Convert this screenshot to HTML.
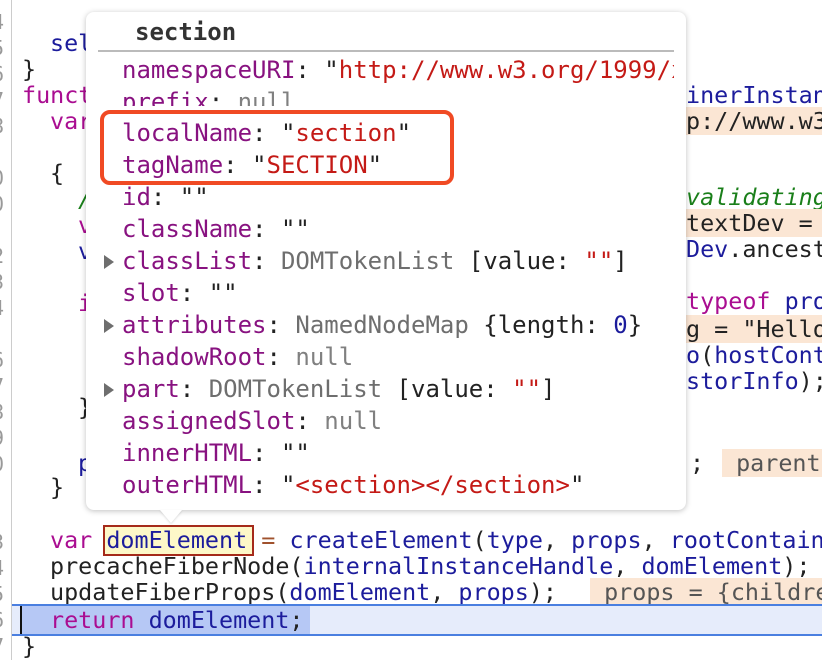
<!DOCTYPE html>
<html style="overflow:hidden"><head><meta charset="utf-8"><style>
body{margin:0;width:822px;height:660px;overflow:hidden;background:#fff;position:relative;font-family:"DejaVu Sans Mono","Liberation Mono",monospace;}
.l{position:absolute;left:0;white-space:pre;font-size:23.4px;line-height:26px;color:#222;}
.k{color:#aa0d91}.n{color:#1c1c9c}.g{color:#1a7f1a;font-style:italic}.s{color:#c41a16}
.pk{background:#fbe6d4}
.gut{position:absolute;left:0;top:0;width:11px;height:660px;border-right:1px solid #ccc;background:#fff;overflow:hidden;}
.gut div{position:absolute;left:-8px;font-size:20px;color:#999;}
.tt{position:absolute;left:86px;top:12px;width:600px;height:498px;background:#fff;border-radius:8px;box-shadow:0 1px 6px rgba(0,0,0,.25);overflow:hidden}
.r{position:absolute;left:36px;white-space:pre;font-size:24px;line-height:32px;color:#222;}
.p{color:#881280}.gr{color:#808080}.ty{color:#6e6e6e}.tri{position:absolute;left:18px;width:0;height:0;border-left:10px solid #6e6e6e;border-top:7px solid transparent;border-bottom:7px solid transparent;}
</style></head><body>
<div style="position:absolute;left:0;top:0;width:822px;height:660px;overflow:hidden">
<div class="l" style="left:50px;top:30px"><span class="n">selection</span></div>
<div class="l" style="left:22px;top:56px">}</div>
<div class="l" style="left:22px;top:82px"><span class="k">function</span></div>
<div class="l" style="left:50px;top:108px"><span class="k">var</span></div>
<div class="l" style="left:50px;top:160px">{</div>
<div class="l" style="left:78px;top:186px"><span class="g">/</span></div>
<div class="l" style="left:78px;top:212px"><span class="k">v</span></div>
<div class="l" style="left:78px;top:238px"><span class="n">v</span></div>
<div class="l" style="left:78px;top:290px"><span class="k">i</span></div>
<div class="l" style="left:78px;top:394px">}</div>
<div class="l" style="left:78px;top:450px"><span class="n">p</span></div>
<div class="l" style="left:50px;top:474px">}</div>
<div class="l" style="left:686px;top:82px"><span class="n">inerInstance</span></div>
<div class="l" style="left:686px;top:108px"><span class="pk">p://www.w3.or</span></div>
<div class="l" style="left:686px;top:184px"><span class="g">validating</span></div>
<div class="l" style="left:686px;top:210px"><span class="pk">textDev = </span></div>
<div class="l" style="left:686px;top:236px"><span class="n">Dev</span>.ancest</div>
<div class="l" style="left:686px;top:288px"><span class="k">typeof</span> <span class="n">pro</span></div>
<div class="l" style="left:686px;top:316px"><span class="pk">g = "Hello</span></div>
<div class="l" style="left:686px;top:342px"><span class="n">o</span>(<span class="n">hostCont</span></div>
<div class="l" style="left:686px;top:368px"><span class="n">storInfo</span>);</div>
<div class="l" style="left:690px;top:450px">;</div>
<div class="l" style="left:722px;top:450px"><span class="pk" style="color:#555"> parentN</span></div>
<div style="position:absolute;left:103px;top:525px;width:147px;height:27px;background:#fdf8c8;border:2px solid #a52a1a;"></div>
<div class="l" style="left:50px;top:527px"><span class="k">var</span> <span class="n">domElement</span> <span style="color:#a0522d">=</span> <span class="n">createElement</span>(<span class="n">type</span>, <span class="n">props</span>, <span class="n">rootContainer</span></div>
<div class="l" style="left:50px;top:553px">precacheFiberNode(<span class="n">internalInstanceHandle</span>, <span class="n">domElement</span>);</div>
<div class="l" style="left:50px;top:579px">updateFiberProps(<span class="n">domElement</span>, <span class="n">props</span>);</div>
<div class="l" style="left:590px;top:579px"><span class="pk" style="color:#555"> props = {children</span></div>
<div style="position:absolute;left:12px;top:604px;width:810px;height:28px;background:#e6ecfb;border-top:2px solid #4a7fe0;border-bottom:2px solid #4a7fe0;"></div>
<div style="position:absolute;left:22px;top:606px;width:288px;height:28px;background:#b6c8f5;"></div>
<div style="position:absolute;left:20px;top:606px;width:2px;height:28px;background:#111;"></div>
<div class="l" style="left:50px;top:607px"><span class="k">return</span> <span class="n">domElement</span>;</div>
<div class="l" style="left:22px;top:633px">}</div>
<div class="gut"><div style="top:10px">4</div><div style="top:36px">5</div><div style="top:62px">6</div><div style="top:88px">7</div><div style="top:114px">8</div><div style="top:166px">0</div><div style="top:192px">0</div><div style="top:244px">2</div><div style="top:270px">3</div><div style="top:296px">4</div><div style="top:348px">6</div><div style="top:374px">7</div><div style="top:400px">8</div><div style="top:426px">9</div><div style="top:452px">0</div><div style="top:530px">3</div><div style="top:556px">4</div><div style="top:582px">5</div><div style="top:608px">6</div><div style="top:634px">7</div></div>
<div class="tt">
<div style="position:absolute;left:49px;top:6px;font-size:24px;font-weight:bold;color:#333;font-family:'DejaVu Sans Mono',monospace">section</div>
<div style="position:absolute;left:12px;top:38px;width:576px;height:2px;background:#bbb"></div>
<div style="position:absolute;left:0;top:40px;width:588px;height:40px;overflow:hidden">
<div class="r" style="top:2px"><span class="p">namespaceURI</span>: "<span class="s">http://www.w3.org/1999/x</span></div></div>
<div class="r" style="top:74px;height:20px;overflow:hidden"><span class="p">prefix</span>: <span class="gr">null</span></div>
<div class="r" style="top:105px"><span class="p">localName</span>: "<span class="s">section</span>"</div>
<div class="r" style="top:137px"><span class="p">tagName</span>: "<span class="s">SECTION</span>"</div>
<div class="r" style="top:169px"><span class="p">id</span>: ""</div>
<div class="r" style="top:201px"><span class="p">className</span>: ""</div>
<div class="tri" style="top:243px"></div>
<div class="r" style="top:233px"><span class="p">classList</span>: <span class="ty">DOMTokenList</span> [value: <span class="s">""</span>]</div>
<div class="r" style="top:265px"><span class="p">slot</span>: ""</div>
<div class="tri" style="top:307px"></div>
<div class="r" style="top:297px"><span class="p">attributes</span>: <span class="ty">NamedNodeMap</span> {length: <span class="n">0</span>}</div>
<div class="r" style="top:329px"><span class="p">shadowRoot</span>: <span class="gr">null</span></div>
<div class="tri" style="top:371px"></div>
<div class="r" style="top:361px"><span class="p">part</span>: <span class="ty">DOMTokenList</span> [value: <span class="s">""</span>]</div>
<div class="r" style="top:393px"><span class="p">assignedSlot</span>: <span class="gr">null</span></div>
<div class="r" style="top:425px"><span class="p">innerHTML</span>: ""</div>
<div class="r" style="top:457px"><span class="p">outerHTML</span>: "<span class="s">&lt;section&gt;&lt;/section&gt;</span>"</div>
<div style="position:absolute;left:14px;top:98px;width:346px;height:67px;border:4px solid #f04a24;border-radius:10px;"></div>
</div>
<div style="position:absolute;left:160px;top:510px;width:0;height:0;border-left:11px solid transparent;border-right:11px solid transparent;border-top:13px solid #fff;filter:drop-shadow(0 1px 1px rgba(0,0,0,.15))"></div>
</div>
</body></html>
